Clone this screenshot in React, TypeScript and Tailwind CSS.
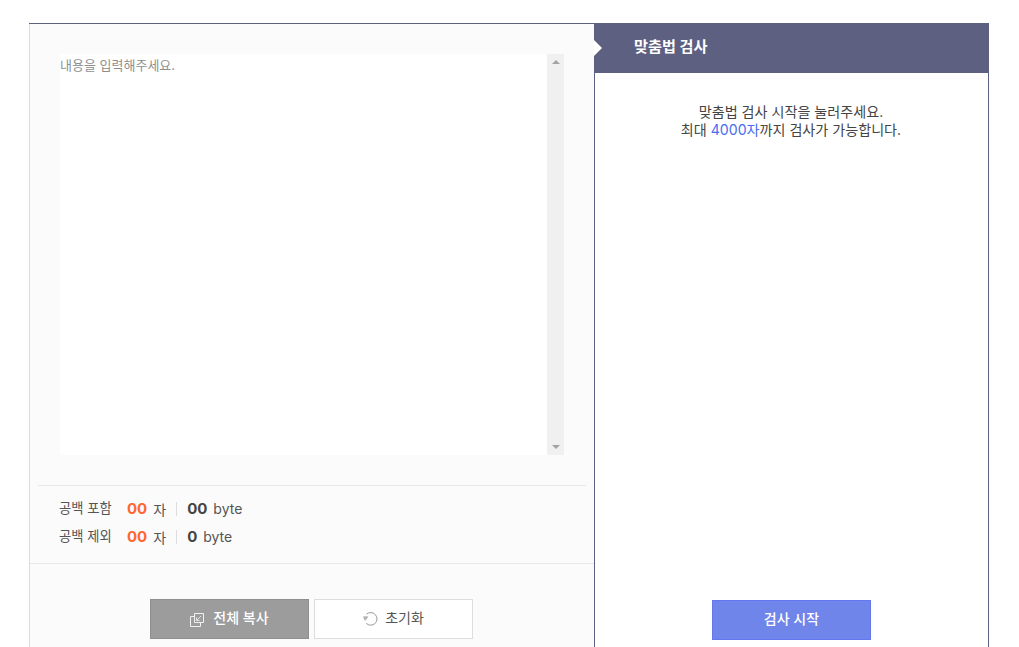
const font = { fontFamily: "Inter, 'Noto Sans CJK KR', sans-serif" };

function CopyIcon() {
  return (
    <svg width="16" height="16" viewBox="0 0 16 16" fill="none" stroke="#f0f0f0" strokeWidth="1">
      <path d="M5.5 5.5H1.5V15.5H11.5V11.5" />
      <path d="M5.5 2.5H14.5V11.5H5.5Z" />
      <path d="M12 5L8 9M7.5 6.5V9.5H10.5" strokeOpacity="0.85" />
    </svg>
  );
}

function ResetIcon() {
  return (
    <svg width="16" height="16" viewBox="0 0 16 16" fill="none" stroke="#999999" strokeWidth="1">
      <path d="M4.5 3.2A6.3 6.3 0 1 1 4.3 12.4" />
      <path d="M1.5 5.8H5.8L3 9.4Z" fill="#bbbbbb" strokeWidth="0.6" />
    </svg>
  );
}

function CountRow({ label, chars, bytes }: { label: string; chars: string; bytes: string }) {
  return (
    <div className="flex h-[28px] items-center text-[14px] text-[#555]">
      <span className="w-[68px] text-[13.3px]">{label}</span>
      <b className="text-[15px] font-bold text-[#ff6633]">{chars}</b>
      <span className="ml-[6px]">자</span>
      <span className="mx-[10px] h-[14px] w-px bg-[#dddddd]" />
      <b className="text-[15px] font-bold text-[#444]">{bytes}</b>
      <span className="ml-[6px] pb-[1px]">byte</span>
    </div>
  );
}

export default function App() {
  return (
    <div className="h-[647px] overflow-hidden bg-white pl-[29px] pt-[23px]" style={font}>
      <div className="flex h-[640px] w-[960px] border-t border-[#5d6080]">
        <div className="flex w-[565px] flex-col border-l border-[#dddddd] bg-[#fbfbfb]">
          <div className="pl-[30px] pt-[30px]">
            <div className="flex h-[401px] w-[504px] bg-white">
              <div className="flex-1 py-[3px] text-[13px] leading-[16px] text-[#8f8f8f]">내용을 입력해주세요.</div>
              <div className="flex w-[17px] flex-col items-center justify-between bg-[#f0f0f0] py-[6px]">
                <span className="h-0 w-0 border-x-[4px] border-b-[4px] border-x-transparent border-b-[#a3a3a3]" />
                <span className="h-0 w-0 border-x-[4px] border-t-[4px] border-x-transparent border-t-[#a3a3a3]" />
              </div>
            </div>
          </div>
          <div className="mx-[8px] mt-[30px] border-t border-[#e8e8e8] px-[21px] pt-[9px] pb-[12px]">
            <CountRow label="공백 포함" chars="00" bytes="00" />
            <CountRow label="공백 제외" chars="00" bytes="0" />
          </div>
          <div className="flex justify-center gap-[5px] border-t border-[#e8e8e8] pt-[35px] pr-[2px]">
            <button className="flex h-[40px] w-[159px] items-center justify-center gap-[8px] border border-[#8f8f8f] bg-[#9c9c9c] text-[14px] font-medium text-white">
              <CopyIcon />
              <span className="pb-[3px]">전체 복사</span>
            </button>
            <button className="flex h-[40px] w-[159px] items-center justify-center gap-[7px] border border-[#dddddd] bg-white text-[14px] text-[#555]">
              <ResetIcon />
              <span className="pb-[3px]">초기화</span>
            </button>
          </div>
        </div>
        <div className="relative flex w-[395px] flex-col border-x border-[#5d6080] bg-white">
          <div className="-mx-px flex h-[49px] items-center bg-[#5d6080] pb-[2px] pl-[40px] text-[15.2px] font-bold text-white">
            맞춤법 검사
          </div>
          <span className="absolute top-[16px] -left-px h-0 w-0 border-y-[8px] border-l-[8px] border-y-transparent border-l-white" />
          <p className="mt-[30px] pr-[1px] text-center text-[14.1px] leading-[18px] text-[#444]">
            맞춤법 검사 시작을 눌러주세요.
            <br />
            최대 <span className="text-[#4a6cf0]">4000자</span>까지 검사가 가능합니다.
          </p>
          <div className="mt-[461px] flex justify-center">
            <button className="h-[40px] w-[159px] border border-[#6378ee] bg-[#7085e9] pb-[3px] text-[14px] font-medium text-white">
              검사 시작
            </button>
          </div>
        </div>
      </div>
    </div>
  );
}
